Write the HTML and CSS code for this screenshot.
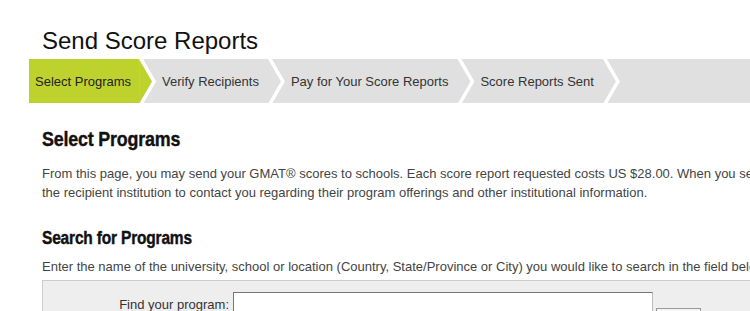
FILE: index.html
```html
<!DOCTYPE html>
<html>
<head>
<title>Send Score Reports</title>
<link rel="stylesheet" href="styles.css">
</head>
<body>

<div class="page">
  <h1>Send Score Reports</h1>

  <div class="steps">
    <div class="step active">Select Programs</div>
    <div class="step">Verify Recipients</div>
    <div class="step">Pay for Your Score Reports</div>
    <div class="step">Score Reports Sent</div>
  </div>

  <div class="content">
    <h2>Select Programs</h2>
    <p>From this page, you may send your GMAT&reg; scores to schools. Each score report requested costs US $28.00. When you send score reports, you authorize<br>
    the recipient institution to contact you regarding their program offerings and other institutional information.</p>

    <h3>Search for Programs</h3>
    <p class="hint">Enter the name of the university, school or location (Country, State/Province or City) you would like to search in the field below and click Search.</p>

    <div class="search-box">
      <label for="q">Find your program:</label>
      <input id="q" type="text">
      <button>Search</button>
    </div>
  </div>
</div>

</body>
</html>
```

FILE: styles.css
```css
html, body { margin: 0; padding: 0; overflow: hidden; background: #fff; }
body { font-family: "Liberation Sans", Arial, sans-serif; font-size: 13px; color: #444; }
.page { width: 1100px; padding-left: 29px; }
h1 { font-size: 24px; font-weight: normal; line-height: 28px; color: #111; margin: 27px 0 4px 13px; }

.steps { display: flex; height: 44px; background: #e0e0e0; overflow: hidden; }
.step { position: relative; line-height: 44px; padding: 1px 9px 0 23px; color: #333; white-space: nowrap; }
.step:first-child { padding-left: 6px; padding-right: 8px; }
.step.active { background: #bed22e; color: #222; }
.step::before, .step::after { content: ''; position: absolute; top: 0; left: 100%; height: 45px; z-index: 1; }
.step.active::before { width: 13px; background: #bed22e; clip-path: polygon(0 0, 13px 50%, 0 100%); }
.step::after { width: 18px; background: #fff; clip-path: polygon(0 0, 4px 0, 17px 50%, 4px 100%, 0 100%, 13px 50%); }

.content { padding-left: 13px; }
h2, h3 { font-family: "Liberation Sans", Arial, sans-serif; font-weight: bold; color: #111; transform-origin: left center; letter-spacing: -0.2px; -webkit-text-stroke: 0.4px #111; }
h2 { font-size: 21px; line-height: 24px; margin: 24px 0 13px; transform: scaleX(0.85); }
h3 { font-size: 18px; line-height: 22px; margin: 25px 0 8px; transform: scaleX(0.86); }
p { line-height: 19px; margin: 0; white-space: nowrap; }
.hint { margin-bottom: 4px; }

.search-box { display: flex; align-items: flex-start; background: #eee; border-top: 1px solid #ccc; border-left: 1px solid #ccc; padding-top: 11px; height: 60px; }
.search-box label { width: 186px; text-align: right; padding-top: 5px; color: #333; }
.search-box input { width: 414px; height: 22px; margin-left: 4px; border: 1px solid #777; border-right-color: #bbb; border-bottom-color: #bbb; padding: 0 2px; }
.search-box button { margin: 16px 0 0 3px; width: 45px; height: 22px; background: #f4f4f4; border: 1px solid #999; font: 12px "Liberation Sans", Arial, sans-serif; }
```
